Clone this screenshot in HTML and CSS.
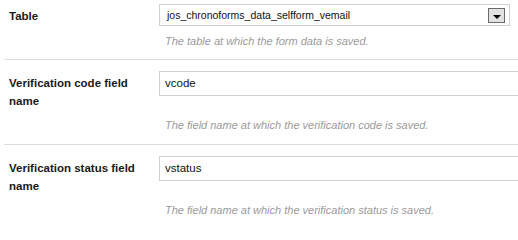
FILE: index.html
```html
<!DOCTYPE html>
<html>
<head>
<meta charset="utf-8">
<link rel="stylesheet" href="styles.css">
</head>
<body>
<div class="form">
  <div class="row first">
    <label class="label">Table</label>
    <div class="select">
      <span class="select-text">jos_chronoforms_data_selfform_vemail</span>
      <span class="select-btn"><span class="arrow"></span></span>
    </div>
    <div class="hint">The table at which the form data is saved.</div>
  </div>
  <div class="row">
    <label class="label">Verification code field name</label>
    <div class="input">vcode</div>
    <div class="hint">The field name at which the verification code is saved.</div>
  </div>
  <div class="row">
    <label class="label">Verification status field name</label>
    <div class="input">vstatus</div>
    <div class="hint">The field name at which the verification status is saved.</div>
  </div>
</div>
</body>
</html>
```
FILE: styles.css
```css
html, body {
  margin: 0;
  padding: 0;
  background: #fff;
  overflow: hidden;
}
body {
  font-family: "Liberation Sans", Arial, sans-serif;
  color: #222;
}
.form {
  margin-left: 4px;
}
.row {
  display: grid;
  grid-template-columns: 155px 1fr;
  align-items: start;
  padding: 11px 0 11px 0;
}
.row.first {
  padding-top: 4px;
  padding-bottom: 10px;
}
.row + .row {
  border-top: 1px solid #dcdcdc;
}
.label {
  grid-column: 1;
  grid-row: 1;
  padding: 3px 0 0 5px;
  font-size: 11.5px;
  font-weight: bold;
  line-height: 18px;
  color: #1a1a1a;
  width: 130px;
}
.select {
  grid-column: 2;
  grid-row: 1;
  box-sizing: border-box;
  width: 351px;
  height: 22px;
  border: 1px solid #d0d0d0;
  display: flex;
  align-items: center;
  justify-content: space-between;
  padding: 0 4px 0 7px;
  font-size: 10.5px;
  color: #111;
}
.select-btn {
  box-sizing: border-box;
  width: 17px;
  height: 15px;
  border: 1px solid #6a6a6a;
  background: #e2e2e2;
  display: flex;
  justify-content: center;
  align-items: flex-end;
  padding-bottom: 3px;
}
.arrow {
  width: 0;
  height: 0;
  border-left: 4px solid transparent;
  border-right: 4px solid transparent;
  border-top: 4px solid #000;
}
.input {
  grid-column: 2;
  grid-row: 1;
  box-sizing: border-box;
  width: 380px;
  height: 25px;
  border: 1px solid #cfcfcf;
  padding: 0 0 0 5px;
  font-size: 11.5px;
  line-height: 23px;
  color: #111;
}
.hint {
  grid-column: 2;
  grid-row: 2;
  margin-top: 7px;
  padding-left: 6px;
  font-size: 11px;
  font-style: italic;
  line-height: 16px;
  color: #9a9a9a;
  white-space: nowrap;
}
```
